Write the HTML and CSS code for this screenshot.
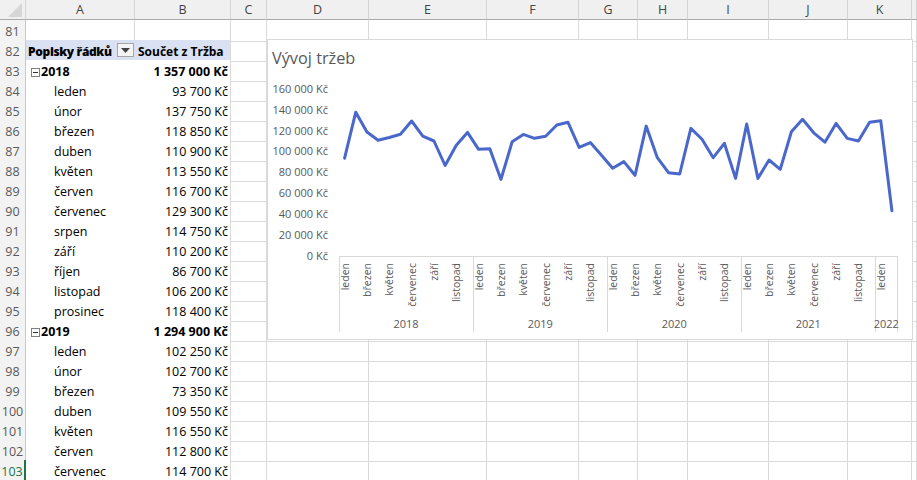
FILE: index.html
```html
<!DOCTYPE html>
<html lang="cs">

<head>
     <meta charset="UTF-8">
     <title>Vývoj tržeb</title>
     <link rel="stylesheet" href="styles.css">
</head>

<body>
     <div class="sheet">
          <div class="row head">
               <span class="corner"><svg width="25" height="19" viewBox="0 0 25 19"><polygon points="8,17 22,17 22,3" fill="#d6d6d6" /></svg></span>
               <span>A</span><span>B</span><span>C</span><span>D</span><span>E</span><span>F</span><span>G</span><span>H</span><span>I</span><span>J</span><span>K</span><span></span>
          </div>
          <div class="row"><span class="num">81</span><span></span><span></span><span></span><span></span><span></span><span></span><span></span><span></span><span></span><span></span><span></span><span></span></div>
          <div class="row"><span class="num">82</span>
               <span class="pv pa ph ph-a"><b>Popisky řádků</b><i class="drop"><svg width="9" height="5" viewBox="0 0 9 5"><polygon points="0,0 9,0 4.5,5" fill="#444" /></svg></i></span>
               <span class="pv pb ph">Součet z Tržba</span>
               <span></span><span></span><span></span><span></span><span></span><span></span><span></span><span></span><span></span><span></span></div>
          <div class="row"><span class="num">83</span><span class="pv pa total"><i class="toggle"></i>2018</span><span class="pv pb total val">1 357 000 Kč</span><span></span><span></span><span></span><span></span><span></span><span></span><span></span><span></span><span></span><span></span></div>
          <div class="row"><span class="num">84</span><span class="pv pa month">leden</span><span class="pv pb val">93 700 Kč</span><span></span><span></span><span></span><span></span><span></span><span></span><span></span><span></span><span></span><span></span></div>
          <div class="row"><span class="num">85</span><span class="pv pa month">únor</span><span class="pv pb val">137 750 Kč</span><span></span><span></span><span></span><span></span><span></span><span></span><span></span><span></span><span></span><span></span></div>
          <div class="row"><span class="num">86</span><span class="pv pa month">březen</span><span class="pv pb val">118 850 Kč</span><span></span><span></span><span></span><span></span><span></span><span></span><span></span><span></span><span></span><span></span></div>
          <div class="row"><span class="num">87</span><span class="pv pa month">duben</span><span class="pv pb val">110 900 Kč</span><span></span><span></span><span></span><span></span><span></span><span></span><span></span><span></span><span></span><span></span></div>
          <div class="row"><span class="num">88</span><span class="pv pa month">květen</span><span class="pv pb val">113 550 Kč</span><span></span><span></span><span></span><span></span><span></span><span></span><span></span><span></span><span></span><span></span></div>
          <div class="row"><span class="num">89</span><span class="pv pa month">červen</span><span class="pv pb val">116 700 Kč</span><span></span><span></span><span></span><span></span><span></span><span></span><span></span><span></span><span></span><span></span></div>
          <div class="row"><span class="num">90</span><span class="pv pa month">červenec</span><span class="pv pb val">129 300 Kč</span><span></span><span></span><span></span><span></span><span></span><span></span><span></span><span></span><span></span><span></span></div>
          <div class="row"><span class="num">91</span><span class="pv pa month">srpen</span><span class="pv pb val">114 750 Kč</span><span></span><span></span><span></span><span></span><span></span><span></span><span></span><span></span><span></span><span></span></div>
          <div class="row"><span class="num">92</span><span class="pv pa month">září</span><span class="pv pb val">110 200 Kč</span><span></span><span></span><span></span><span></span><span></span><span></span><span></span><span></span><span></span><span></span></div>
          <div class="row"><span class="num">93</span><span class="pv pa month">říjen</span><span class="pv pb val">86 700 Kč</span><span></span><span></span><span></span><span></span><span></span><span></span><span></span><span></span><span></span><span></span></div>
          <div class="row"><span class="num">94</span><span class="pv pa month">listopad</span><span class="pv pb val">106 200 Kč</span><span></span><span></span><span></span><span></span><span></span><span></span><span></span><span></span><span></span><span></span></div>
          <div class="row"><span class="num">95</span><span class="pv pa month">prosinec</span><span class="pv pb val">118 400 Kč</span><span></span><span></span><span></span><span></span><span></span><span></span><span></span><span></span><span></span><span></span></div>
          <div class="row"><span class="num">96</span><span class="pv pa total"><i class="toggle"></i>2019</span><span class="pv pb total val">1 294 900 Kč</span><span></span><span></span><span></span><span></span><span></span><span></span><span></span><span></span><span></span><span></span></div>
          <div class="row"><span class="num">97</span><span class="pv pa month">leden</span><span class="pv pb val">102 250 Kč</span><span></span><span></span><span></span><span></span><span></span><span></span><span></span><span></span><span></span><span></span></div>
          <div class="row"><span class="num">98</span><span class="pv pa month">únor</span><span class="pv pb val">102 700 Kč</span><span></span><span></span><span></span><span></span><span></span><span></span><span></span><span></span><span></span><span></span></div>
          <div class="row"><span class="num">99</span><span class="pv pa month">březen</span><span class="pv pb val">73 350 Kč</span><span></span><span></span><span></span><span></span><span></span><span></span><span></span><span></span><span></span><span></span></div>
          <div class="row"><span class="num">100</span><span class="pv pa month">duben</span><span class="pv pb val">109 550 Kč</span><span></span><span></span><span></span><span></span><span></span><span></span><span></span><span></span><span></span><span></span></div>
          <div class="row"><span class="num">101</span><span class="pv pa month">květen</span><span class="pv pb val">116 550 Kč</span><span></span><span></span><span></span><span></span><span></span><span></span><span></span><span></span><span></span><span></span></div>
          <div class="row"><span class="num">102</span><span class="pv pa month">červen</span><span class="pv pb val">112 800 Kč</span><span></span><span></span><span></span><span></span><span></span><span></span><span></span><span></span><span></span><span></span></div>
          <div class="row"><span class="num active">103</span><span class="pv pa month">červenec</span><span class="pv pb val">114 700 Kč</span><span></span><span></span><span></span><span></span><span></span><span></span><span></span><span></span><span></span><span></span></div>

          <div class="chart">
               <svg width="644" height="299" viewBox="1 1 644 299">
                    <text class="title" x="5" y="24.5">Vývoj tržeb</text>
                    <g class="ylab">
                         <text x="61" y="220.8">0 Kč</text>
                         <text x="61" y="199.9">20 000 Kč</text>
                         <text x="61" y="179.1">40 000 Kč</text>
                         <text x="61" y="158.2">60 000 Kč</text>
                         <text x="61" y="137.3">80 000 Kč</text>
                         <text x="61" y="116.4">100 000 Kč</text>
                         <text x="61" y="95.6">120 000 Kč</text>
                         <text x="61" y="74.7">140 000 Kč</text>
                         <text x="61" y="53.8">160 000 Kč</text>
                    </g>
                    <g class="axis">
                         <line x1="72" y1="217.5" x2="630.5" y2="217.5" />
                         <line x1="72.5" y1="217" x2="72.5" y2="293" />
                         <line x1="206.5" y1="217" x2="206.5" y2="293" />
                         <line x1="340.5" y1="217" x2="340.5" y2="293" />
                         <line x1="474.5" y1="217" x2="474.5" y2="293" />
                         <line x1="608.5" y1="217" x2="608.5" y2="293" />
                         <line x1="630.5" y1="217" x2="630.5" y2="293" />
                    </g>
                    <g class="mlab">
                         <text transform="translate(81.6,224) rotate(-90)">leden</text>
                         <text transform="translate(103.9,224) rotate(-90)">březen</text>
                         <text transform="translate(126.3,224) rotate(-90)">květen</text>
                         <text transform="translate(148.6,224) rotate(-90)">červenec</text>
                         <text transform="translate(171,224) rotate(-90)">září</text>
                         <text transform="translate(193.3,224) rotate(-90)">listopad</text>
                         <text transform="translate(215.6,224) rotate(-90)">leden</text>
                         <text transform="translate(238,224) rotate(-90)">březen</text>
                         <text transform="translate(260.3,224) rotate(-90)">květen</text>
                         <text transform="translate(282.7,224) rotate(-90)">červenec</text>
                         <text transform="translate(305,224) rotate(-90)">září</text>
                         <text transform="translate(327.3,224) rotate(-90)">listopad</text>
                         <text transform="translate(349.7,224) rotate(-90)">leden</text>
                         <text transform="translate(372,224) rotate(-90)">březen</text>
                         <text transform="translate(394.4,224) rotate(-90)">květen</text>
                         <text transform="translate(416.7,224) rotate(-90)">červenec</text>
                         <text transform="translate(439,224) rotate(-90)">září</text>
                         <text transform="translate(461.4,224) rotate(-90)">listopad</text>
                         <text transform="translate(483.7,224) rotate(-90)">leden</text>
                         <text transform="translate(506.1,224) rotate(-90)">březen</text>
                         <text transform="translate(528.4,224) rotate(-90)">květen</text>
                         <text transform="translate(550.7,224) rotate(-90)">červenec</text>
                         <text transform="translate(573.1,224) rotate(-90)">září</text>
                         <text transform="translate(595.4,224) rotate(-90)">listopad</text>
                         <text transform="translate(617.8,224) rotate(-90)">leden</text>
                    </g>
                    <g class="years">
                         <text x="139" y="289">2018</text>
                         <text x="273.3" y="289">2019</text>
                         <text x="407.3" y="289">2020</text>
                         <text x="541.3" y="289">2021</text>
                         <text x="619.3" y="289">2022</text>
                    </g>
                    <polyline class="line" points="77.59,119.2 88.76,73.2 99.93,93 111.1,101.2 122.27,98.5 133.44,95.2 144.61,82 155.78,97.2 166.95,102 178.12,126.5 189.29,106.2 200.46,93.4 211.63,110.3 222.8,109.8 233.97,140.4 245.14,102.7 256.31,95.4 267.48,99.3 278.65,97.3 289.82,86 300.99,83.3 312.16,108.4 323.33,103.6 334.5,116.3 345.67,129.3 356.84,122.6 368.01,136.3 379.18,87.1 390.35,118.7 401.52,133.7 412.69,135 423.86,89.4 435.03,100.3 446.2,118.7 457.37,104.3 468.54,139.4 479.71,85 490.88,139.4 502.05,121 513.22,130.4 524.39,92.8 535.56,80.3 546.73,93.8 557.9,103.2 569.07,84.4 580.24,99.4 591.41,102 602.58,83.3 613.75,81.7 624.92,171.7" />
               </svg>
          </div>
     </div>
</body>

</html>
```

FILE: styles.css
```css
* {
     margin: 0px;
     padding: 0px;
     box-sizing: border-box;
}

body {
     font-family: "Open Sans", "Noto Sans", sans-serif;
     font-size: 12.5px;
     color: #000;
     background-color: #fff;
     overflow: hidden;
}

.sheet {
     position: relative;
     width: 917px;
     height: 480px;
     overflow: hidden;
}

.row {
     display: grid;
     grid-template-columns: 26px 109px 96px 36px 102px 118px 92px 59px 50px 81px 79px 64px 1fr;
     height: 20px;

     span {
          border-right: 1px solid #dadada;
          border-bottom: 1px solid #dadada;
          line-height: 19px;
          padding-top: 2px;
          white-space: nowrap;
     }
}

.row.head span {
     background-color: #f0f0f0;
     color: #444;
     text-align: center;
     padding-top: 0px;
     line-height: 19px;
     border-right-color: #d4d4d4;
     border-bottom-color: #ababab;
}

.row.head .corner {
     padding: 0px;
     line-height: 0px;
     svg {
          display: block;
     }
}

.num {
     background-color: #f3f3f3;
     color: #595959;
     text-align: center;
     border-right-color: #c8c8c8 !important;
}

.num.active {
     color: #217346;
     border-right: 2px solid #217346 !important;
}

.pv {
     background-color: #fff;
     border-bottom-color: #fff !important;
}

.pa {
     border-right-color: #fff !important;
}

.ph {
     background-color: #d9e1f2;
     font-weight: bold;
     font-size: 12px;
     border-bottom-color: #8ea9db !important;
}

.ph.pa {
     border-right-color: #d9e1f2 !important;
}

.ph-a {
     display: flex;
     align-items: flex-start;
     padding-left: 2px;

     b {
          line-height: 19px;
          letter-spacing: -0.35px;
     }
}

.drop {
     margin-left: auto;
     margin-top: 1px;
     width: 17px;
     height: 14px;
     border: 1px solid #a6a6a6;
     background-color: #f4f4f4;
     display: flex;
     justify-content: center;
     align-items: center;
}

.pb.ph {
     padding-left: 3px;
}

.total {
     font-weight: bold;
     border-bottom-color: #8ea9db !important;
}

.pa.total {
     padding-left: 5px;
}

.toggle {
     display: inline-block;
     position: relative;
     width: 9px;
     height: 9px;
     border: 1px solid #808080;
     margin-right: 1px;
     vertical-align: -1px;
}

.toggle::after {
     content: "";
     position: absolute;
     left: 1px;
     right: 1px;
     top: 3px;
     height: 1px;
     background-color: #333;
}

.month {
     padding-left: 28px;
}

.val {
     text-align: right;
     padding-right: 2px;
}

.chart {
     position: absolute;
     left: 267px;
     top: 39px;
     width: 646px;
     height: 301px;
     background-color: #fff;
     border: 1px solid #d9d9d9;

     svg {
          display: block;
          font-family: "Open Sans", "Noto Sans", sans-serif;
     }

     .title {
          font-size: 16.3px;
          fill: #595959;
     }

     .ylab text {
          font-size: 11px;
          fill: #595959;
          text-anchor: end;
     }

     .axis line {
          stroke: #d9d9d9;
          stroke-width: 1px;
     }

     .mlab text {
          font-size: 10.5px;
          fill: #595959;
          text-anchor: end;
     }

     .years text {
          font-size: 11px;
          fill: #595959;
          text-anchor: middle;
     }

     .line {
          fill: none;
          stroke: #4a67cb;
          stroke-width: 3px;
          stroke-linejoin: round;
          stroke-linecap: round;
     }
}
```
